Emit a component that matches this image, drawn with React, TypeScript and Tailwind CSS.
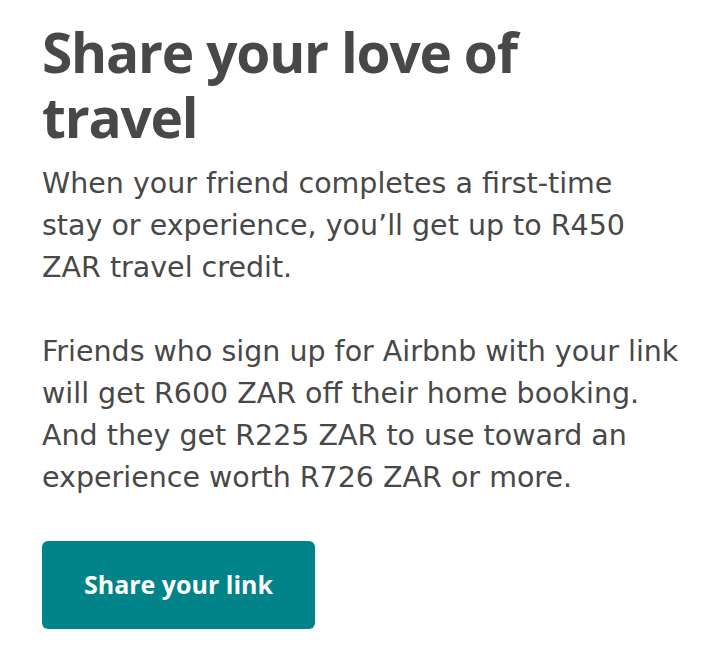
export default function App() {
  return (
    <div className="min-h-[656px] w-[720px] bg-white pl-[42px] pr-[40px] pt-[19px] text-[#484848]">
      <h1 className="font-['Open_Sans',sans-serif] text-[55px] font-bold leading-[65px] tracking-[-1.2px]">
        Share your love of travel
      </h1>
      <div className="mt-[14px] font-['DejaVu_Sans',sans-serif] text-[28.5px] leading-[42px]">
        <p>When your friend completes a first-time stay or experience, you’ll get up to R450 ZAR travel credit.</p>
        <p className="mt-[42px]">
          Friends who sign up for Airbnb with your link will get R600 ZAR off their home booking. And they get
          R225 ZAR to use toward an experience worth R726 ZAR or more.
        </p>
      </div>
      <button className="mt-[42px] flex h-[88px] w-[273px] items-center justify-center rounded-[6px] bg-[#008489] font-['Open_Sans',sans-serif] text-[25px] font-bold text-white">
        Share your link
      </button>
    </div>
  )
}
